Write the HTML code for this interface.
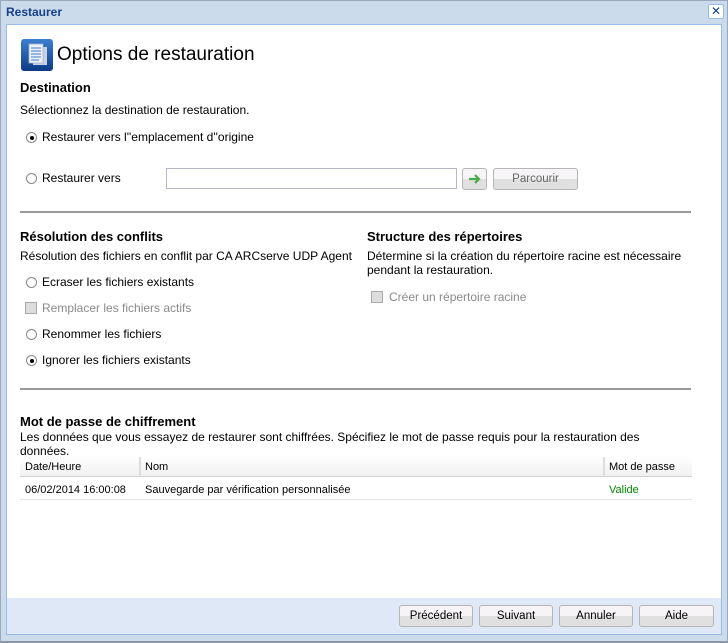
<!DOCTYPE html>
<html><head><meta charset="utf-8"><style>
*{margin:0;padding:0;box-sizing:border-box}
body{width:728px;height:643px;overflow:hidden;background:#cbdbeb;font-family:"Liberation Sans",Tahoma,sans-serif;font-size:12px;color:#000;position:relative}
.a{position:absolute;white-space:nowrap}
.outer{position:absolute;left:0;top:0;width:728px;height:643px;border:1px solid #99a8bc;border-bottom:2px solid #8c96a4}
.title{left:6px;top:5px;font-weight:bold;color:#15428b;font-size:12px}
.panel{position:absolute;left:6px;top:24px;width:716px;height:611px;border:1px solid #99bbe8;background:#fff}
.foot{position:absolute;left:7px;top:598px;width:714px;height:36px;background:#dfe8f6}
h2{font-size:13px;font-weight:bold}
.rad{position:absolute;width:11px;height:11px;border:1px solid #888;border-radius:50%;background:#fff}
.rad.on::after{content:"";position:absolute;left:2.5px;top:2.5px;width:4px;height:4px;border-radius:50%;background:#000}
.chk{position:absolute;width:12px;height:12px;border:1px solid #aaa;background:#ddd}
.g{color:#8a8a8a}
.btn{position:absolute;height:22px;border:1px solid #b5b5b5;border-radius:3px;background:linear-gradient(#f7f4f7 50%,#e0e0e0 50%);text-align:center;line-height:20px;font-size:11.5px}
hr{position:absolute;border:0;border-top:2px solid #9a9a9a;height:0}
.x{position:absolute;left:708px;top:4px;width:16px;height:15px;border:1px solid #99bbe8;border-radius:2px;background:#fff;color:#15428b;font-size:12px;line-height:13px;text-align:center}
</style></head><body>
<div class="outer"></div>
<div class="a title">Restaurer</div>
<div class="x">✕</div>
<div class="panel"></div>
<div class="foot"></div>

<svg class="a" style="left:21px;top:39px" width="32" height="32" viewBox="0 0 32 32">
<defs><linearGradient id="b" x1="0" y1="0" x2="0" y2="1"><stop offset="0" stop-color="#3d7fd0"/><stop offset="1" stop-color="#0d3a86"/></linearGradient></defs>
<rect x="0" y="0" width="32" height="32" rx="3" fill="url(#b)"/>
<rect x="12" y="8" width="14" height="18" fill="#c9d3e3"/>
<rect x="8" y="5" width="14" height="19" fill="#eef2f8" stroke="#9fb0cc" stroke-width=".8"/>
<g stroke="#5b8ed3" stroke-width="1.2"><line x1="10" y1="9" x2="20" y2="9"/><line x1="10" y1="12" x2="20" y2="12"/><line x1="10" y1="15" x2="20" y2="15"/><line x1="10" y1="18" x2="20" y2="18"/><line x1="10" y1="21" x2="18" y2="21"/></g>
</svg>
<div class="a" style="left:57px;top:44px;font-size:19px">Options de restauration</div>

<h2 class="a" style="left:20px;top:80px">Destination</h2>
<div class="a" style="left:20px;top:103px">Sélectionnez la destination de restauration.</div>
<div class="rad on" style="left:26px;top:132px"></div>
<div class="a" style="left:42px;top:130px">Restaurer vers l''emplacement d''origine</div>
<div class="rad" style="left:26px;top:173px"></div>
<div class="a" style="left:42px;top:171px">Restaurer vers</div>
<div class="a" style="left:166px;top:168px;width:291px;height:21px;border:1px solid #b5b8c8;background:#fff"></div>
<div class="btn" style="left:462px;top:168px;width:25px">
<svg width="14" height="12" viewBox="0 0 14 12" style="margin-top:4px"><path d="M1 6H11M7 2L11 6L7 10" stroke="#4ea84e" stroke-width="2.2" fill="none"/></svg></div>
<div class="btn g" style="left:493px;top:168px;width:85px;color:#666">Parcourir</div>
<hr style="left:20px;top:211px;width:671px">

<h2 class="a" style="left:20px;top:229px">Résolution des conflits</h2>
<div class="a" style="left:20px;top:249px">Résolution des fichiers en conflit par CA ARCserve UDP Agent</div>
<div class="rad" style="left:26px;top:277px"></div>
<div class="a" style="left:42px;top:275px">Ecraser les fichiers existants</div>
<div class="chk" style="left:25px;top:302px"></div>
<div class="a g" style="left:42px;top:301px">Remplacer les fichiers actifs</div>
<div class="rad" style="left:26px;top:329px"></div>
<div class="a" style="left:42px;top:327px">Renommer les fichiers</div>
<div class="rad on" style="left:26px;top:355px"></div>
<div class="a" style="left:42px;top:353px">Ignorer les fichiers existants</div>

<h2 class="a" style="left:367px;top:229px">Structure des répertoires</h2>
<div class="a" style="left:367px;top:249px;line-height:14px">Détermine si la création du répertoire racine est nécessaire<br>pendant la restauration.</div>
<div class="chk" style="left:371px;top:291px"></div>
<div class="a g" style="left:389px;top:290px">Créer un répertoire racine</div>
<hr style="left:20px;top:388px;width:671px">

<h2 class="a" style="left:20px;top:414px">Mot de passe de chiffrement</h2>
<div class="a" style="left:20px;top:430px;line-height:14px">Les données que vous essayez de restaurer sont chiffrées. Spécifiez le mot de passe requis pour la restauration des<br>données.</div>
<div class="a" style="left:20px;top:457px;width:672px;height:20px;background:linear-gradient(#fff,#f0f0f0);border-bottom:1px solid #d0d0d0"></div>
<div class="a" style="left:139px;top:457px;width:2px;height:20px;background:#ddd"></div>
<div class="a" style="left:603px;top:457px;width:2px;height:20px;background:#ddd"></div>
<div class="a" style="left:25px;top:461px;font-size:11px">Date/Heure</div>
<div class="a" style="left:145px;top:461px;font-size:11px">Nom</div>
<div class="a" style="left:609px;top:461px;font-size:11px">Mot de passe</div>
<div class="a" style="left:20px;top:499px;width:672px;height:1px;background:#e6e6e6"></div>
<div class="a" style="left:25px;top:484px;font-size:11px">06/02/2014 16:00:08</div>
<div class="a" style="left:145px;top:484px;font-size:11px">Sauvegarde par vérification personnalisée</div>
<div class="a" style="left:609px;top:484px;font-size:11px;color:#080">Valide</div>

<div class="btn" style="left:399px;top:605px;width:74px">Précédent</div>
<div class="btn" style="left:479px;top:605px;width:74px">Suivant</div>
<div class="btn" style="left:559px;top:605px;width:74px">Annuler</div>
<div class="btn" style="left:639px;top:605px;width:75px">Aide</div>
</body></html>
